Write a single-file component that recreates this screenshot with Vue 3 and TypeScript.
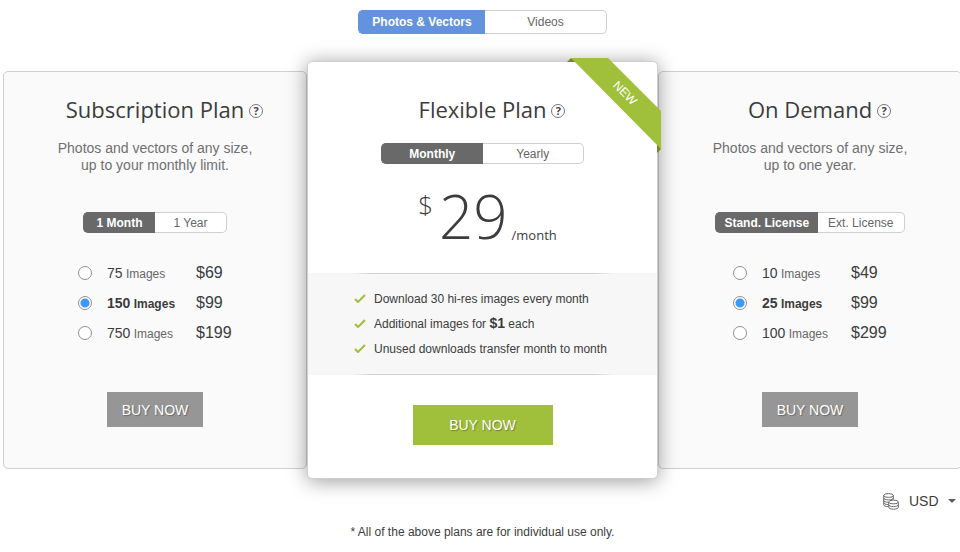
<script setup lang="ts">
import { ref } from 'vue'

interface Tier {
  count: number
  price: number
}

interface SidePlan {
  id: string
  title: string
  description: string[]
  options: string[]
  tiers: Tier[]
}

const mediaTypes = ['Photos & Vectors', 'Videos']
const media = ref(mediaTypes[0])

const subscription: SidePlan = {
  id: 'subscription',
  title: 'Subscription Plan',
  description: ['Photos and vectors of any size,', 'up to your monthly limit.'],
  options: ['1 Month', '1 Year'],
  tiers: [
    { count: 75, price: 69 },
    { count: 150, price: 99 },
    { count: 750, price: 199 },
  ],
}

const onDemand: SidePlan = {
  id: 'demand',
  title: 'On Demand',
  description: ['Photos and vectors of any size,', 'up to one year.'],
  options: ['Stand. License', 'Ext. License'],
  tiers: [
    { count: 10, price: 49 },
    { count: 25, price: 99 },
    { count: 100, price: 299 },
  ],
}

const sidePlans = [subscription, onDemand]
const billingOptions = ['Monthly', 'Yearly']
const billing = ref(billingOptions[0])

const chosenOption = ref<Record<string, string>>({
  subscription: '1 Month',
  demand: 'Stand. License',
})
const chosenTier = ref<Record<string, number>>({ subscription: 150, demand: 25 })
const currency = ref('USD')
</script>

<template>
  <main class="pricing">
    <div class="switch switch-media" role="group" aria-label="Media type">
      <button
        v-for="type in mediaTypes"
        :key="type"
        type="button"
        :class="{ on: media === type }"
        :aria-pressed="media === type"
        @click="media = type"
      >{{ type }}</button>
    </div>

    <div class="plans">
      <section v-for="plan in sidePlans" :key="plan.id" class="plan side" :class="plan.id">
        <h2>
          {{ plan.title }}
          <button type="button" class="help" :aria-label="'About ' + plan.title">?</button>
        </h2>
        <p class="description">
          <span v-for="line in plan.description" :key="line">{{ line }}</span>
        </p>
        <div class="switch" role="group" :aria-label="plan.title + ' option'">
          <button
            v-for="option in plan.options"
            :key="option"
            type="button"
            :class="{ on: chosenOption[plan.id] === option }"
            :aria-pressed="chosenOption[plan.id] === option"
            @click="chosenOption[plan.id] = option"
          >{{ option }}</button>
        </div>
        <ul class="tiers">
          <li v-for="tier in plan.tiers" :key="tier.count">
            <input
              :id="plan.id + tier.count"
              v-model="chosenTier[plan.id]"
              type="radio"
              :name="plan.id"
              :value="tier.count"
            />
            <label :for="plan.id + tier.count">
              <span class="amount"><span class="count">{{ tier.count }}</span> Images</span>
              <span class="cost">${{ tier.price }}</span>
            </label>
          </li>
        </ul>
        <button type="button" class="buy">BUY NOW</button>
      </section>

      <section class="plan flexible">
        <h2>
          Flexible Plan
          <button type="button" class="help" aria-label="About Flexible Plan">?</button>
        </h2>
        <div class="switch" role="group" aria-label="Billing period">
          <button
            v-for="option in billingOptions"
            :key="option"
            type="button"
            :class="{ on: billing === option }"
            :aria-pressed="billing === option"
            @click="billing = option"
          >{{ option }}</button>
        </div>
        <p class="price">
          <span class="sign">$</span>
          <span class="value">29</span>
          <span class="period">/month</span>
        </p>
        <ul class="features">
          <li>
            <svg class="tick" viewBox="0 0 12 9" aria-hidden="true"><path d="M1 5l3 3 7-7" /></svg>
            <span>Download 30 hi-res images every month</span>
          </li>
          <li>
            <svg class="tick" viewBox="0 0 12 9" aria-hidden="true"><path d="M1 5l3 3 7-7" /></svg>
            <span>Additional images for <strong>$1</strong> each</span>
          </li>
          <li>
            <svg class="tick" viewBox="0 0 12 9" aria-hidden="true"><path d="M1 5l3 3 7-7" /></svg>
            <span>Unused downloads transfer month to month</span>
          </li>
        </ul>
        <button type="button" class="buy buy-main">BUY NOW</button>
        <svg class="ribbon" viewBox="0 0 94 95">
          <path class="fold" d="M0 4L4 0l5 4zM90 86l4 5-4 4z" />
          <path class="band" d="M4 0h37l53 53v38z" />
          <text x="58" y="39" text-anchor="middle" transform="rotate(45 58 35)">NEW</text>
        </svg>
      </section>
    </div>

    <div class="currency">
      <svg class="coins" viewBox="0 0 16 17" aria-hidden="true">
        <ellipse cx="5.5" cy="2.5" rx="4.8" ry="1.9" />
        <path d="M.7 2.5v9.3c0 .9 1.8 1.8 4.4 1.9M10.3 2.5v4.2M.7 5c0 1.1 2.1 1.9 4.8 1.9s4.8-.8 4.8-1.9M.7 7.4c0 1 1.9 1.8 4.4 1.9M.7 9.7c0 1 1.9 1.8 4.4 1.9" />
        <ellipse cx="10.5" cy="9" rx="4.8" ry="1.9" />
        <path d="M5.7 9v5.3c0 1.1 2.1 1.9 4.8 1.9s4.8-.8 4.8-1.9V9M5.700 11.700c0 1.100 2.100 1.900 4.800 1.900s4.800-.8 4.800-1.900" />
      </svg>
      <div class="picker">
        <select v-model="currency" aria-label="Currency">
          <option>USD</option>
          <option>EUR</option>
          <option>GBP</option>
        </select>
        <svg class="caret" viewBox="0 0 8 4" aria-hidden="true"><path d="M0 0h8L4 4z" /></svg>
      </div>
    </div>

    <p class="note">* All of the above plans are for individual use only.</p>
  </main>
</template>

<style>
body {
  background: #fff;
  overflow-x: hidden;
}
</style>

<style scoped>
.pricing {
  display: flex;
  flex-direction: column;
  align-items: center;
  margin-right: -2px;
  padding: 10px 0 12px 3px;
  color: #3c3c3c;
  font-family: "Liberation Sans", Arial, sans-serif;
  font-size: 14px;
}

h2,
p,
ul {
  margin: 0;
  padding: 0;
}

ul {
  list-style: none;
}

button,
select {
  margin: 0;
  font-family: inherit;
  cursor: pointer;
}

.switch {
  display: flex;
  height: 21px;
}

.switch button {
  flex: 1;
  padding: 0;
  border: 1px solid #cfcfcf;
  border-left: 0;
  border-radius: 0 5px 5px 0;
  background: #fff;
  color: #666;
  font-size: 12px;
  white-space: nowrap;
}

.switch button:first-child {
  flex: none;
  width: 50%;
  border: 1px solid #cfcfcf;
  border-right: 0;
  border-radius: 5px 0 0 5px;
}

.switch .on,
.switch .on:first-child {
  border-color: #696969;
  background: #696969;
  color: #fff;
  font-weight: bold;
}

.switch-media {
  width: 249px;
  height: 24px;
}

.switch-media button:first-child {
  width: 51%;
}

.switch-media .on,
.switch-media .on:first-child {
  border-color: #6392de;
  background: #6392de;
}

.plans {
  display: grid;
  grid-template-columns: 304fr 351fr 304fr;
  align-items: center;
  width: 100%;
  margin-top: 27px;
}

.plan {
  display: flex;
  flex-direction: column;
  align-items: center;
  box-sizing: border-box;
  border: 1px solid #cfcfcf;
  border-radius: 5px;
  grid-row: 1;
}

.side {
  padding: 21px 0 41px;
  background: #fafafa;
}

.subscription {
  grid-column: 1;
}

.demand {
  grid-column: 3;
}

.flexible {
  position: relative;
  z-index: 1;
  grid-column: 2;
  padding: 31px 0 33px;
  background: #fff;
  box-shadow: 0 2px 20px rgba(0, 0, 0, 0.4);
}

h2 {
  display: flex;
  align-items: center;
  gap: 5px;
  font-family: "Open Sans", sans-serif;
  font-size: 22px;
  font-weight: 400;
  line-height: 32px;
}

/* The negative margin keeps the title itself centred. */
.help {
  box-sizing: border-box;
  width: 14px;
  height: 14px;
  margin: 3px -19px 0 0;
  padding: 0;
  border: 1px solid #777;
  border-radius: 50%;
  background: #fff;
  color: #444;
  font-size: 11px;
  font-weight: bold;
  line-height: 12px;
}

.description {
  margin-top: 15px;
  color: #707070;
  line-height: 17px;
  text-align: center;
}

.description span {
  display: block;
}

.side .switch {
  margin-top: 38px;
}

.subscription .switch {
  width: 144px;
}

.demand .switch {
  width: 190px;
}

.demand .switch button:first-child {
  width: 54%;
}

.tiers {
  width: 154px;
  margin-top: 25px;
}

.tiers li {
  display: flex;
  align-items: center;
  gap: 15px;
  height: 30px;
}

.tiers input {
  flex: none;
  box-sizing: border-box;
  appearance: none;
  width: 14px;
  height: 14px;
  margin: 0;
  border: 1px solid #909090;
  border-radius: 50%;
  background: #fff;
}

.tiers input:checked {
  background: radial-gradient(circle, #3b99fc 4px, #fff 5px);
}

.tiers label {
  display: flex;
  align-items: baseline;
  flex: 1;
  white-space: nowrap;
}

.amount {
  width: 89px;
  color: #666;
  font-size: 12px;
}

.count {
  color: #3c3c3c;
  font-size: 14px;
}

.tiers input:checked + label .amount {
  color: #3c3c3c;
  font-weight: bold;
}

.cost {
  font-size: 16px;
}

.buy {
  width: 96px;
  height: 35px;
  margin-top: 44px;
  padding: 0;
  border: 0;
  background: #969696;
  color: #fff;
  font-size: 14px;
  text-shadow: 1px 1px 1px rgba(0, 0, 0, 0.3);
}

.flexible .switch {
  width: 203px;
  margin-top: 18px;
}

.price {
  display: flex;
  align-items: flex-start;
  height: 80px;
  margin-top: 12px;
  padding-left: 10px;
  font-family: "Open Sans", sans-serif;
  font-weight: 300;
}

.sign {
  margin-right: 6px;
  font-size: 26px;
  line-height: 56px;
}

.value {
  font-size: 60px;
  line-height: 80px;
}

.period {
  align-self: flex-end;
  margin-left: 4px;
  font-size: 13px;
  font-weight: 400;
  line-height: 42px;
}

.features {
  position: relative;
  box-sizing: border-box;
  align-self: stretch;
  margin-top: 17px;
  padding: 13px 0 14px 46px;
  background: #f7f7f7;
}

.features::before,
.features::after {
  position: absolute;
  left: 12%;
  right: 12%;
  height: 1px;
  background: linear-gradient(90deg, transparent, #cfcfcf 8%, #cfcfcf 92%, transparent);
  content: "";
}

.features::before {
  top: 0;
}

.features::after {
  bottom: 0;
}

.features li {
  display: flex;
  align-items: center;
  gap: 8px;
  height: 25px;
  font-size: 12px;
  line-height: 14px;
}

.features strong {
  font-size: 14px;
}

.tick {
  width: 12px;
  height: 9px;
  fill: none;
  stroke: #9fbe3b;
  stroke-width: 2;
}

.buy-main {
  width: 140px;
  height: 40px;
  margin-top: 30px;
  background: #a0bf3b;
}

.ribbon {
  position: absolute;
  top: -4px;
  right: -4px;
  width: 94px;
  height: 95px;
}

.fold {
  fill: #718a24;
}

.band {
  fill: #a0bf3b;
}

.ribbon text {
  fill: #fff;
  font-size: 12px;
}

.currency {
  display: flex;
  align-items: center;
  align-self: flex-end;
  gap: 10px;
  margin: 12px 6px 0 0;
}

.coins {
  width: 16px;
  height: 17px;
  fill: none;
  stroke: #6b6b6b;
}

.picker {
  position: relative;
  width: 47px;
}

select {
  display: block;
  appearance: none;
  width: 100%;
  height: 20px;
  padding: 0;
  border: 0;
  background: transparent;
  color: #3c3c3c;
  font-size: 14px;
}

.caret {
  position: absolute;
  top: 8px;
  right: 0;
  width: 8px;
  height: 4px;
  fill: #5c5c5c;
  pointer-events: none;
}

.note {
  margin-top: 12px;
  font-size: 12px;
  line-height: 18px;
}
</style>
